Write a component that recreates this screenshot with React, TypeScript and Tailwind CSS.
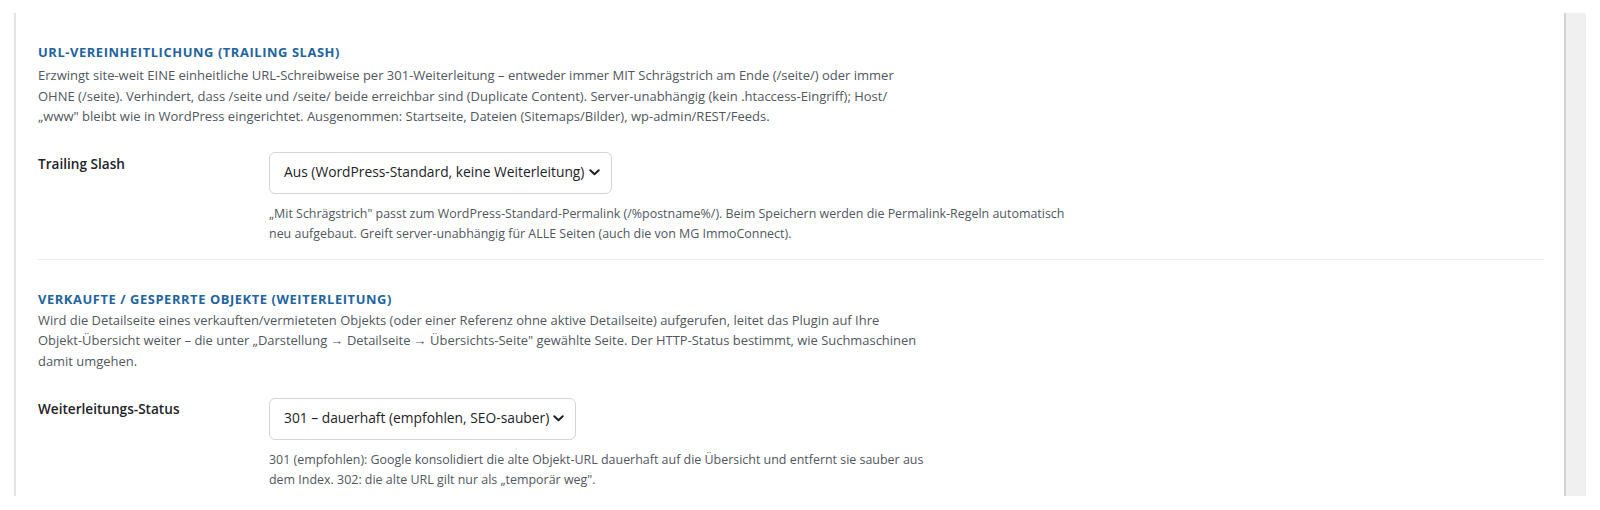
import React from "react";

const font = { fontFamily: '"Open Sans", "Noto Sans", sans-serif' };

function Chevron() {
  return (
    <svg width="11" height="7" viewBox="0 0 11 7" fill="none" className="shrink-0">
      <path d="M1.3 1.3L5.5 5.3L9.7 1.3" stroke="#1d2327" strokeWidth="2" strokeLinecap="round" strokeLinejoin="round" />
    </svg>
  );
}

function FakeSelect({ label, width }: { label: string; width: string }) {
  return (
    <div
      className={`flex h-[42px] items-center justify-between rounded-[6px] border border-[#d3d4d6] bg-white pl-[14px] pr-[11px] text-[13.8px] text-[#1d2327] ${width}`}
    >
      <span className="whitespace-nowrap">{label}</span>
      <Chevron />
    </div>
  );
}

function Heading({ children }: { children: React.ReactNode }) {
  return (
    <h2 className="text-[12.9px] font-bold uppercase leading-[18px] tracking-[0.045em] text-[#22649e]">
      {children}
    </h2>
  );
}

export default function App() {
  return (
    <div className="min-h-[510px] w-[1600px] bg-white pl-[14px] pt-[13px]" style={font}>
      <div className="flex h-[483px] w-[1572px]">
        <div className="flex-1 border-l-2 border-[#e4e4e4] pl-[22px] pr-[20px] pt-[30px]">
          <Heading>URL-Vereinheitlichung (Trailing Slash)</Heading>
          <p className="mt-[4px] whitespace-nowrap text-[13px] leading-[20.5px] text-[#50575e]">
            Erzwingt site-weit EINE einheitliche URL-Schreibweise per 301-Weiterleitung – entweder immer MIT Schrägstrich am Ende (/seite/) oder immer
            <br />
            OHNE (/seite). Verhindert, dass /seite und /seite/ beide erreichbar sind (Duplicate Content). Server-unabhängig (kein .htaccess-Eingriff); Host/
            <br />
            „www" bleibt wie in WordPress eingerichtet. Ausgenommen: Startseite, Dateien (Sitemaps/Bilder), wp-admin/REST/Feeds.
          </p>

          <div className="mt-[25px] flex">
            <div className="w-[231px] shrink-0 text-[13.6px] font-semibold leading-[23px] text-[#1d2327]">
              Trailing Slash
            </div>
            <div>
              <FakeSelect label="Aus (WordPress-Standard, keine Weiterleitung)" width="w-[343px]" />
              <p className="mt-[10px] whitespace-nowrap text-[12.45px] leading-[20px] text-[#50575e]">
                „Mit Schrägstrich" passt zum WordPress-Standard-Permalink (/%postname%/). Beim Speichern werden die Permalink-Regeln automatisch
                <br />
                neu aufgebaut. Greift server-unabhängig für ALLE Seiten (auch die von MG ImmoConnect).
              </p>
            </div>
          </div>

          <div className="mt-[15px] h-px bg-[#ececec]" />

          <div className="pt-[30px]">
            <Heading>Verkaufte / gesperrte Objekte (Weiterleitung)</Heading>
            <p className="mt-[2px] whitespace-nowrap text-[12.95px] leading-[20.7px] text-[#50575e]">
              Wird die Detailseite eines verkauften/vermieteten Objekts (oder einer Referenz ohne aktive Detailseite) aufgerufen, leitet das Plugin auf Ihre
              <br />
              Objekt-Übersicht weiter – die unter „Darstellung → Detailseite → Übersichts-Seite" gewählte Seite. Der HTTP-Status bestimmt, wie Suchmaschinen
              <br />
              damit umgehen.
            </p>

            <div className="mt-[26px] flex">
              <div className="w-[231px] shrink-0 text-[13.6px] font-semibold leading-[22px] text-[#1d2327]">
                Weiterleitungs-Status
              </div>
              <div>
                <FakeSelect label="301 – dauerhaft (empfohlen, SEO-sauber)" width="w-[307px]" />
                <p className="mt-[10px] whitespace-nowrap text-[12.45px] leading-[20px] text-[#50575e]">
                  301 (empfohlen): Google konsolidiert die alte Objekt-URL dauerhaft auf die Übersicht und entfernt sie sauber aus
                  <br />
                  dem Index. 302: die alte URL gilt nur als „temporär weg".
                </p>
              </div>
            </div>
          </div>
        </div>
        <div className="w-[22px] shrink-0 border-l-2 border-[#d2d2d2] bg-[#f0f0f0]" />
      </div>
    </div>
  );
}
